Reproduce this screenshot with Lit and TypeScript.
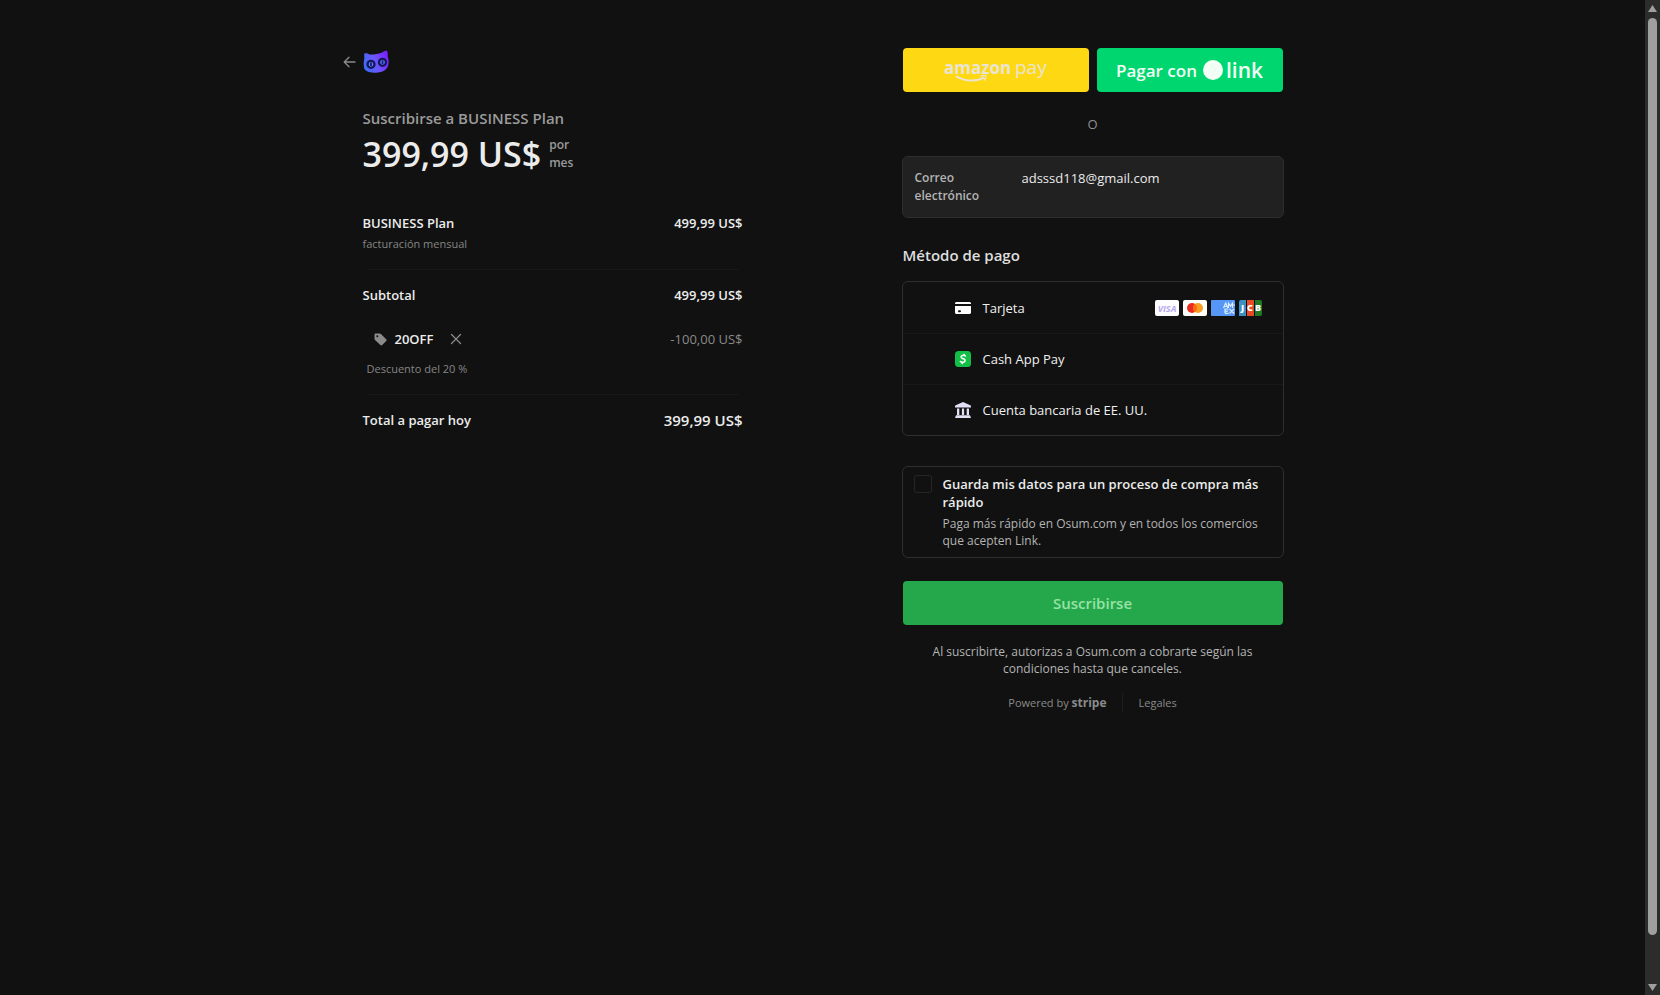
import { LitElement, html, css, svg } from "lit";
import { customElement, state } from "lit/decorators.js";

const backIcon = svg`<svg width="13" height="12" viewBox="0 0 13 12" fill="none" stroke="#8a8a8a" stroke-width="1.3" stroke-linecap="round" stroke-linejoin="round"><path d="M12 6H1.5M6 1.2 1.2 6 6 10.8"/></svg>`;

const catLogo = svg`<svg width="28" height="24" viewBox="0 0 28 24">
  <defs><linearGradient id="cat" x1="0" y1="0.6" x2="1" y2="0.3"><stop offset="0" stop-color="#3d6cf5"/><stop offset="0.45" stop-color="#6a58fb"/><stop offset="1" stop-color="#7a1dff"/></linearGradient></defs>
  <path fill="url(#cat)" d="M1.500 3.200c1.800-.2 3.600.3 5 1.200 4.300.2 8.300-.4 12.200-1.700 1.500-1.300 3.300-2.100 5.200-2.300.9 2 1.100 4.300.8 6.400 1.400 3.600 1.400 7.400-.3 10.800-2.700 3.800-6.700 5-11.300 5.200S4 22.300 1.500 19.300C.4 16 .4 11.700 1.400 8.300c-.3-1.700-.3-3.600.1-5.100z"/>
  <g fill="#5a86ff" stroke="#17165c" stroke-width="2.300"><circle cx="8" cy="14.300" r="3.500"/><circle cx="19.500" cy="12.300" r="3.500"/></g>
  <path d="M8 12.600v3.400M19.500 10.600v3.400" stroke="#1d1b77" stroke-width="1.800"/>
</svg>`;

const tagIcon = svg`<svg width="13" height="13" viewBox="0 0 13 13"><path fill="#8b8b8b" fill-rule="evenodd" d="M.5 1.800C.5 1 1 .5 1.800.5h4c.4 0 .8.2 1.100.5l5.300 5.300c.5.500.5 1.300 0 1.800l-4 4c-.5.500-1.300.5-1.800 0L1 6.900C.7 6.600.5 6.200.5 5.800zM3.300 2.300a1 1 0 1 0 0 2 1 1 0 0 0 0-2z"/></svg>`;

const closeIcon = svg`<svg width="12" height="12" viewBox="0 0 12 12" stroke="#8a8a8a" stroke-width="1.300" stroke-linecap="round"><path d="m1.500 1.500 9 9m0-9-9 9"/></svg>`;

const amazonLogo = svg`<svg width="108" height="36" viewBox="0 0 108 36" fill="#e9e4d4" font-family="Open Sans, Noto Sans, sans-serif">
  <text x="2" y="22" font-weight="700" font-size="17">amazon</text><text x="73" y="22" font-size="19">pay</text>
  <path d="M14 24c8 5.500 20 6 28 1.500" fill="none" stroke="#e9e4d4" stroke-width="2"/><path d="M38.500 24c2-.6 4.200-.8 5.200-.2.500 1.100-.4 3.200-1.900 4.700" fill="none" stroke="#e9e4d4" stroke-width="1.300"/>
</svg>`;

const linkLogo = svg`<svg width="61" height="34" viewBox="0 0 61 34" fill="#f3fff6" font-family="Open Sans, Noto Sans, sans-serif">
  <circle cx="11" cy="17" r="10"/><path d="M9.500 11.500c.8 2.600 2.300 4.500 4.500 5.500-2.200 1-3.700 2.900-4.500 5.500" fill="none" stroke="#e4faec" stroke-width="1"/>
  <text x="24" y="25" font-size="21" font-weight="600">link</text>
</svg>`;

const cardIcon = svg`<svg width="16" height="16" viewBox="0 0 16 16" fill="#fff"><path d="M0 3.500C0 2.700.7 2 1.500 2h13c.8 0 1.500.7 1.500 1.500V4H0z"/><path fill-rule="evenodd" d="M0 6h16v6.500c0 .8-.7 1.500-1.500 1.500h-13C.7 14 0 13.300 0 12.500zm4 4.300a1 1 0 1 0 0 2h1a1 1 0 1 0 0-2z"/></svg>`;

const cashIcon = svg`<svg width="16" height="16" viewBox="0 0 16 16"><rect width="16" height="16" rx="3.500" fill="#12c048"/><path d="M10.800 5.500C9.900 4.500 8.600 4.200 7.500 4.500c-1.600.4-1.900 2-.5 2.700l2 .8c1.700.8 1.300 2.800-.6 3.200-1.300.2-2.600-.2-3.500-1.100M9.300 2.800l-.4 1.800M7.400 11.400 7 13.200" fill="none" stroke="#fff" stroke-width="1.500"/></svg>`;

const bankIcon = svg`<svg width="16" height="16" viewBox="0 0 16 16" fill="#e3e0f5"><path d="M8 0l7.300 3.300c.4.200.7.600.7 1V5.500H0V4.300c0-.4.300-.8.700-1zM2 6.500h2.300V13H2zM6.900 6.500h2.200V13H6.900zM11.700 6.500H14V13h-2.300zM1 13.200h14l1 2.800H0z"/></svg>`;

const visa = svg`<svg width="24" height="16" viewBox="0 0 24 16"><rect width="24" height="16" rx="2" fill="#fdfdff"/><text x="12" y="12" text-anchor="middle" font-family="Open Sans, sans-serif" font-size="9" font-style="italic" font-weight="700" fill="#b8a9f0">VISA</text></svg>`;
const mastercard = svg`<svg width="24" height="16" viewBox="0 0 24 16"><rect width="24" height="16" rx="2" fill="#fff"/><circle cx="9" cy="8" r="5" fill="#eb2a20"/><circle cx="15" cy="8" r="5" fill="#f7a021"/><path d="M12 4a5 5 0 0 1 0 8 5 5 0 0 1 0-8z" fill="#f96a18"/></svg>`;
const amex = svg`<svg width="24" height="16" viewBox="0 0 24 16"><rect width="24" height="16" rx="1" fill="#5596f7"/><g fill="none" stroke="#dcecff" stroke-width="1.200"><path d="m12.500 8 2.200-5 2.200 5m-3.600-1.500h3M17.500 8V3.200l2 3 2-3V8M14 13.300V9h3.500M14 11.100h3M14 13.300h3.500M18.500 9l4.500 4.500M23 9l-4.500 4.500M22 5h2"/></g></svg>`;
const jcb = svg`<svg width="24" height="16" viewBox="0 0 24 16"><path d="M2 0h5v16H0V2a2 2 0 0 1 2-2z" fill="#3b91c4"/><path d="M8 0h7v16H8z" fill="#e84c25"/><path d="M16 0h5a2 2 0 0 1 2 2v12a2 2 0 0 1-2 2h-5z" fill="#217a23"/><g fill="#fff" font-family="Open Sans, sans-serif" font-size="9" font-weight="800"><text x="2" y="11">J</text><text x="8" y="11">C</text><text x="16" y="11">B</text></g></svg>`;

const methods = [
  { id: "card", label: "Tarjeta", icon: cardIcon, brands: [visa, mastercard, amex, jcb] },
  { id: "cashapp", label: "Cash App Pay", icon: cashIcon, brands: [] },
  { id: "bank", label: "Cuenta bancaria de EE. UU.", icon: bankIcon, brands: [] },
];

@customElement("order-summary")
class OrderSummary extends LitElement {
  static styles = css`
    :host { display: block; }
    svg { display: block; }
    .brand { display: flex; align-items: center; gap: 7px; height: 28px; margin-left: -20px; }
    .plain { background: none; border: 0; padding: 0; cursor: pointer; }
    h1 { margin: 32px 0 0; font-size: 15px; line-height: 20px; font-weight: 600; color: #9b9b9b; }
    .price { display: flex; align-items: center; gap: 8px; padding-top: 3px; }
    .amount { font-size: 34px; line-height: 46px; font-weight: 600; color: #ececec; }
    .period { width: 30px; font-size: 12px; line-height: 18px; font-weight: 600; color: #9b9b9b; }
    .line { display: flex; justify-content: space-between; font-size: 13px; line-height: 20px; font-weight: 600; color: #ececec; }
    .items { padding-top: 36px; }
    .note { padding-top: 1px; font-size: 11px; line-height: 20px; color: #858585; }
    .rule { height: 1px; background: #191919; margin: 15px 4px; }
    .discount { padding-top: 19px; align-items: center; line-height: 28px; }
    .coupon { display: flex; align-items: center; gap: 8px; padding-left: 11px; }
    .coupon .plain { padding: 9px; }
    .minus { font-weight: 400; color: #8a8a8a; }
    .detail { padding: 5px 4px 0; }
    .total { font-size: 15px; }
  `;
  render() {
    return html`
      <header class="brand"><button class="plain" aria-label="Volver">${backIcon}</button>${catLogo}</header>
      <h1>Suscribirse a BUSINESS Plan</h1>
      <div class="price"><span class="amount">399,99 US$</span><span class="period">por mes</span></div>
      <section class="items">
        <div class="line"><span>BUSINESS Plan</span><span>499,99 US$</span></div>
        <div class="note">facturación mensual</div>
        <div class="rule"></div>
        <div class="line"><span>Subtotal</span><span>499,99 US$</span></div>
        <div class="line discount">
          <span class="coupon">${tagIcon}<span>20OFF</span><button class="plain" aria-label="Quitar código">${closeIcon}</button></span>
          <span class="minus">-100,00 US$</span>
        </div>
        <div class="note detail">Descuento del 20 %</div>
        <div class="rule"></div>
        <div class="line"><span>Total a pagar hoy</span><span class="total">399,99 US$</span></div>
      </section>
    `;
  }
}

@customElement("payment-form")
class PaymentForm extends LitElement {
  @state() private method = "";
  static styles = css`
    :host { display: block; }
    svg { display: block; flex: none; }
    button, input { font-family: inherit; }
    .wallets { display: grid; grid-template-columns: 1fr 1fr; gap: 8px; }
    .wallet, .submit { display: flex; align-items: center; justify-content: center; height: 44px; border: 0; border-radius: 4px; padding: 0; cursor: pointer; }
    .amazon { background: #ffd814; }
    .link { background: #00d66f; color: #f3fff6; font-size: 17px; font-weight: 600; gap: 5px; }
    .or { padding: 22px 0; text-align: center; font-size: 13px; line-height: 20px; color: #8f8f8f; }
    .box { border: 1px solid #2e2e2e; border-radius: 6px; margin: 0 -1px; }
    .contact { display: grid; grid-template-columns: 80px 1fr; column-gap: 27px; align-items: start; padding: 12px 12px; background: #212121; }
    .contact label { font-size: 12px; line-height: 18px; font-weight: 600; color: #b4b4b4; }
    .contact input { background: none; border: 0; padding: 0; outline: 0; min-width: 0; height: 18px; font-size: 13px; color: #ececec; }
    h2 { margin: 0; padding: 25px 0 14px; font-size: 15px; line-height: 24px; font-weight: 600; color: #dedede; }
    .row { box-sizing: border-box; display: flex; align-items: center; height: 51px; padding: 0 20px 0 16px; font-size: 13px; color: #f0f0f0; cursor: pointer; }
    .row + .row { border-top: 1px solid #191919; }
    .row input { appearance: none; width: 16px; height: 16px; margin: 0 20px 0 0; }
    .name { flex: 1; padding-left: 12px; }
    .brands { display: flex; gap: 4px; }
    .save { display: grid; grid-template-columns: 18px 1fr; column-gap: 11px; margin-top: 30px; padding: 8px 11px; }
    .save input { appearance: none; box-sizing: border-box; width: 18px; height: 18px; margin: 0; border: 1px solid #262626; border-radius: 3px; }
    .save input:checked { background: #24a84b; }
    .save label { font-size: 13px; line-height: 18px; font-weight: 600; color: #ececec; }
    .save p { grid-column: 2; margin: 4px 0 0; font-size: 12px; line-height: 17px; color: #b4b4b4; }
    .submit { width: 100%; margin-top: 23px; background: #24a84b; color: #98e2a6; font-size: 15px; font-weight: 600; }
    .terms { margin: 18px 0 0; padding: 0 16px; text-align: center; font-size: 12px; line-height: 17px; color: #b4b4b4; }
    footer { display: flex; justify-content: center; align-items: center; padding-top: 16px; font-size: 11px; line-height: 20px; color: #8a8a8a; }
    footer a { color: inherit; text-decoration: none; }
    footer b { font-size: 12px; font-weight: 700; }
    .legal { margin-left: 15px; padding-left: 16px; border-left: 1px solid #1c1c1c; }
  `;
  render() {
    return html`
      <div class="wallets">
        <button class="wallet amazon" aria-label="Amazon Pay">${amazonLogo}</button>
        <button class="wallet link"><span>Pagar con</span>${linkLogo}</button>
      </div>
      <div class="or">O</div>
      <div class="box contact">
        <label for="email">Correo electrónico</label>
        <input id="email" type="email" readonly value="adsssd118@gmail.com" />
      </div>
      <h2>Método de pago</h2>
      <div class="box">
        ${methods.map((m) => html`
          <label class="row">
            <input type="radio" name="method" .checked=${this.method === m.id} @change=${() => (this.method = m.id)} />
            ${m.icon}<span class="name">${m.label}</span><span class="brands">${m.brands}</span>
          </label>`)}
      </div>
      <div class="box save">
        <input id="save" type="checkbox" />
        <label for="save">Guarda mis datos para un proceso de compra más rápido</label>
        <p>Paga más rápido en Osum.com y en todos los comercios que acepten Link.</p>
      </div>
      <button class="submit">Suscribirse</button>
      <p class="terms">Al suscribirte, autorizas a Osum.com a cobrarte según las condiciones hasta que canceles.</p>
      <footer><a href="#stripe">Powered by <b>stripe</b></a><a class="legal" href="#legal">Legales</a></footer>
    `;
  }
}

@customElement("app-root")
class AppRoot extends LitElement {
  static styles = css`
    :host { display: grid; grid-template-columns: 1fr 15px; min-height: 100vh; background: #111; font-family: "Open Sans", "Noto Sans", sans-serif; }
    main { display: grid; grid-template-columns: minmax(0, 380px) minmax(0, 380px); column-gap: 160px; justify-content: center; align-items: start; padding: 48px 24px; }
    .track { display: flex; flex-direction: column; align-items: center; justify-content: space-between; background: #2c2c2c; padding: 5px 0 4px; box-sizing: border-box; }
    .thumb { width: 9px; height: 93%; margin-bottom: auto; margin-top: 6px; border-radius: 5px; background: #9f9f9f; }
    svg { display: block; flex: none; }
  `;
  render() {
    return html`
      <main><order-summary></order-summary><payment-form></payment-form></main>
      <div class="track" aria-hidden="true">
        <svg width="9" height="7" fill="#9f9f9f"><path d="M4.500 0 9 7H0z"/></svg>
        <div class="thumb"></div>
        <svg width="9" height="7" fill="#9f9f9f"><path d="M0 0h9L4.500 7z"/></svg>
      </div>
    `;
  }
}
